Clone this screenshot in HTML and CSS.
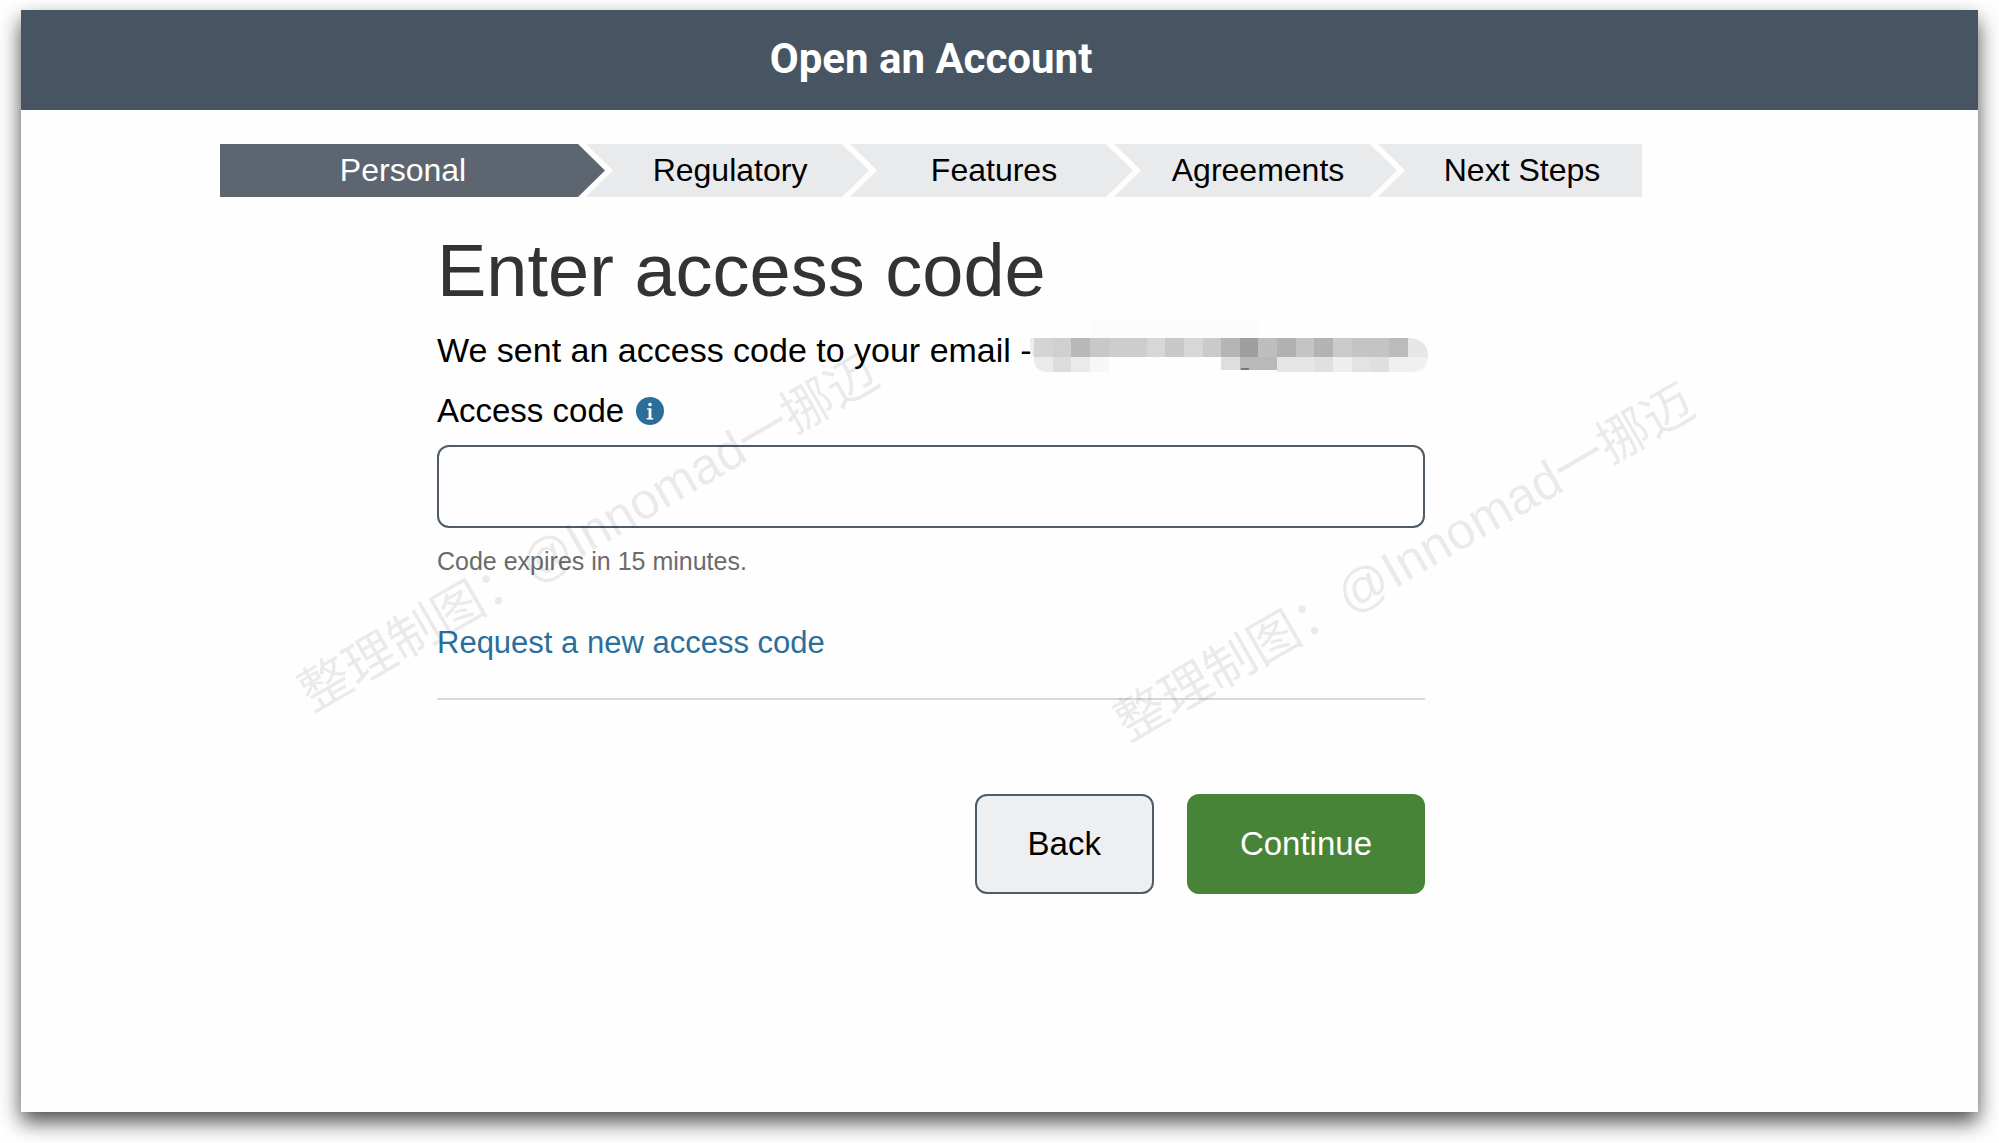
FILE: index.html
```html
<!DOCTYPE html>
<html lang="en">
<head>
  <meta charset="UTF-8" />
  <meta name="viewport" content="width=device-width, initial-scale=1.0"/>
  <title>Open an Account</title>
  <link rel="stylesheet" href="styles.css">
</head>
<body>
  <div class="window">
    <header class="header">
      <div class="header-title">Open an Account</div>
    </header>

    <main class="content">
      <ol class="steps">
        <li class="step active" aria-current="step">Personal</li>
        <li class="step">Regulatory</li>
        <li class="step">Features</li>
        <li class="step">Agreements</li>
        <li class="step">Next Steps</li>
      </ol>

      <form class="code-form">
        <h1>Enter access code</h1>
        <p class="sent">
          <span>We sent an access code to your email -</span>
          <!-- masked email address -->
          <svg class="masked" width="398" height="54" viewBox="0 0 398 54" shape-rendering="crispEdges" aria-hidden="true">
            <defs>
              <clipPath id="mask-shape">
                <path d="M60 0H230V20H380Q398 22 398 38Q398 54 380 54H243L240 52H192V54H18Q4 54 4 40Q0 36 0 20H60Z"/>
              </clipPath>
            </defs>
            <g clip-path="url(#mask-shape)">
              <path fill="#fcfcfc" d="M60 0h170v20H60z"/>
              <path fill="#ededed" d="M0 20h4v19H0z"/>
              <path fill="#d4d4d4" d="M4 20h19v19H4z"/>
              <path fill="#d0d0d0" d="M23 20h18v19H23z"/>
              <path fill="#b8b8b8" d="M41 20h19v19H41z"/>
              <path fill="#c8c8c8" d="M60 20h19v19H60z"/>
              <path fill="#cdcdcd" d="M79 20h38v19H79z"/>
              <path fill="#d7d7d7" d="M117 20h18v19h-18z"/>
              <path fill="#c8c8c8" d="M135 20h19v19h-19z"/>
              <path fill="#d7d7d7" d="M154 20h19v19h-19z"/>
              <path fill="#cacaca" d="M173 20h18v19h-18z"/>
              <path fill="#b5b5b5" d="M191 20h19v19h-19z"/>
              <path fill="#9e9e9e" d="M210 20h18v19h-18z"/>
              <path fill="#bebebe" d="M228 20h19v19h-19z"/>
              <path fill="#b1b1b1" d="M247 20h19v19h-19z"/>
              <path fill="#c4c4c4" d="M266 20h18v19h-18z"/>
              <path fill="#b3b3b3" d="M284 20h19v19h-19z"/>
              <path fill="#cbcbcb" d="M303 20h19v19h-19z"/>
              <path fill="#c4c4c4" d="M322 20h37v19h-37z"/>
              <path fill="#bbbbbb" d="M359 20h19v19h-19z"/>
              <path fill="#e6e6e6" d="M378 20h20v19h-20z"/>
              <path fill="#eaeaea" d="M4 39h19v15H4z"/>
              <path fill="#dcdcdc" d="M23 39h18v15H23z"/>
              <path fill="#eaeaea" d="M41 39h19v15H41z"/>
              <path fill="#f7f7f7" d="M60 39h19v15H60z"/>
              <path fill="#dedede" d="M191 39h19v13h-19z"/>
              <path fill="#b9b9b9" d="M210 39h37v13h-37z"/>
              <path fill="#777777" d="M211 50h8v2h-8z"/>
              <path fill="#e6e6e6" d="M247 39h37v15h-37z"/>
              <path fill="#e0e0e0" d="M284 39h19v15h-19z"/>
              <path fill="#eeeeee" d="M303 39h19v15h-19z"/>
              <path fill="#e3e3e3" d="M322 39h18v15h-18z"/>
              <path fill="#dfdfdf" d="M340 39h19v15h-19z"/>
              <path fill="#f0f0f0" d="M359 39h39v15h-39z"/>
            </g>
          </svg>
        </p>

        <div class="label-row">
          <label for="access-code">Access code</label>
          <svg class="info" width="28" height="28" viewBox="0 0 28 28" role="img" aria-label="More information">
            <circle cx="14" cy="14" r="14" fill="#2d6e99"/>
            <circle cx="14" cy="7.5" r="1.8" fill="#fff"/>
            <path fill="#fff" d="M11 11.2h4.4v9.8h1.8v1.4h-6.4v-1.4h1.8v-8.4H11z"/>
          </svg>
        </div>
        <input type="text" id="access-code" autocomplete="one-time-code" aria-describedby="code-hint" />
        <p class="hint" id="code-hint">Code expires in 15 minutes.</p>
        <a class="request" href="#">Request a new access code</a>

        <hr>

        <div class="actions">
          <button type="button" class="btn btn-back">Back</button>
          <button type="submit" class="btn btn-continue">Continue</button>
        </div>
      </form>
    </main>

    <div class="watermark watermark-left">整理制图：@Innomad一挪迈</div>
    <div class="watermark watermark-right">整理制图：@Innomad一挪迈</div>
  </div>
</body>
</html>
```
FILE: styles.css
```css
* { box-sizing: border-box; }
body { margin: 0; padding: 10px 21px 31px; background: #fff; color: #000; font-family: "Liberation Sans", Arial, sans-serif; }
.window { position: relative; min-height: calc(100vh - 41px); background: #fefefe; box-shadow: 0 10px 20px rgba(0,0,0,0.7); }

.header { height: 100px; padding: 0 7% 4px 0; background: #475461; display: flex; justify-content: center; align-items: center; }
.header-title { color: #fff; font-family: Roboto, sans-serif; font-size: 42px; font-weight: bold; }

.content { padding: 34px 7% 80px 0; }

.steps { display: grid; grid-template-columns: 366fr 264fr 264fr 264fr 264fr; max-width: 1422px; margin: 0 auto; padding: 0; list-style: none; }
.step { height: 53px; margin-right: -19px; padding: 0 19px 0 24px; background: #e9eaeb; font-size: 32px; line-height: 53px; text-align: center;
  clip-path: polygon(0 0, calc(100% - 27px) 0, 100% 50%, calc(100% - 27px) 100%, 0 100%, 27px 50%); }
.step:first-child { padding-left: 0; clip-path: polygon(0 0, calc(100% - 27px) 0, 100% 50%, calc(100% - 27px) 100%, 0 100%); }
.step:last-child { margin-right: 0; padding-right: 0; clip-path: polygon(0 0, 100% 0, 100% 100%, 0 100%, 27px 50%); }
.step.active { background: #5d6670; color: #fff; }

.code-form { max-width: 988px; margin: 32px auto 0; }
h1 { margin: 0; color: #333; font-size: 74px; font-weight: normal; line-height: 84px; }
.sent { display: flex; align-items: center; margin: 0; height: 74px; font-size: 34px; white-space: nowrap; }
.masked { flex: none; margin: 0 0 10px -2px; }

.label-row { display: flex; align-items: center; gap: 12px; height: 48px; margin-bottom: 10px; font-size: 33px; }
input { display: block; width: 100%; height: 83px; padding: 0 24px; border: 2px solid #4f5b67; border-radius: 12px; background: transparent; font: inherit; font-size: 33px; }
.hint { margin: 17px 0 46px; color: #6b6b6b; font-size: 25px; line-height: 32px; }
.request { display: inline-block; color: #2a6f9b; font-size: 31px; line-height: 40px; text-decoration: none; }
hr { height: 2px; margin: 35px 0 94px; border: 0; background: #d8d8d8; }

.actions { display: flex; justify-content: flex-end; gap: 33px; }
.btn { height: 100px; padding: 0 51px; border: 2px solid #4f5b67; border-radius: 12px; font: inherit; font-size: 33px; }
.btn-back { background: #eeeff1; color: #000; }
.btn-continue { background: #488437; border-color: #488437; color: #fff; }

.watermark { position: absolute; color: rgba(0,0,0,0.08); font-family: "Liberation Sans", "Noto Sans CJK SC", sans-serif; font-size: 51px; line-height: 64px; white-space: nowrap; pointer-events: none; transform: translate(-50%, -50%) rotate(-30deg); }
.watermark-left { left: 29%; top: 523px; }
.watermark-right { left: 71%; top: 553px; margin-left: -5px; }
```
